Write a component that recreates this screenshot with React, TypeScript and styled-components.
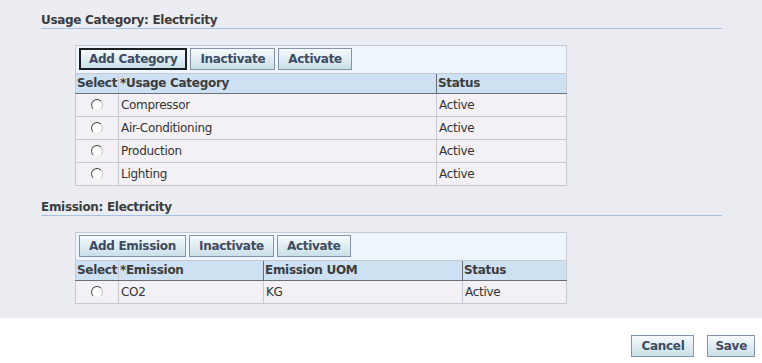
import React from "react";
import styled, { createGlobalStyle } from "styled-components";

const Global = createGlobalStyle`
  html, body { margin: 0; padding: 0; background: #ffffff; }
  body {
    font-family: "DejaVu Sans", Verdana, sans-serif;
    font-size: 12px;
    letter-spacing: -0.3px;
    color: #333333;
  }
`;

const Page = styled.div`
  width: 762px;
`;

const Content = styled.div`
  background: #ecedf2;
  height: 318px;
  padding: 0 40px 0 41px;
  box-sizing: border-box;
  overflow: hidden;
`;

const Heading = styled.h2<{ $first?: boolean }>`
  margin: ${(p) => (p.$first ? "0" : "1px")} 0 0 0;
  padding-top: 13px;
  height: 15px;
  line-height: 15px;
  font-size: 12px;
  font-weight: bold;
  color: #3c3c3c;
  border-bottom: 1px solid #a3c2e3;
`;

const Grid = styled.table`
  border-collapse: collapse;
  table-layout: fixed;
  width: 491px;
  margin: 16px 0 0 34px;
  border: 1px solid #c6c9d3;
`;

const ToolbarCell = styled.td`
  background: #eef5fd;
  padding: 2px 3px 2px;
  border-bottom: 1px solid #c6c9d3;
`;

const Toolbar = styled.div`
  display: flex;
  gap: 3px;
  height: 23px;
`;

const Button = styled.button<{ $focused?: boolean; $pad?: number }>`
  box-sizing: border-box;
  font-family: "DejaVu Sans", Verdana, sans-serif;
  font-size: 12px;
  letter-spacing: -0.3px;
  font-weight: bold;
  color: #3e4b61;
  height: 22px;
  padding: 0 ${(p) => (p.$pad ?? 9) - (p.$focused ? 1 : 0)}px;
  border: ${(p) => (p.$focused ? "2px solid #1c1f24" : "1px solid #8493a8")};
  background: linear-gradient(#f6fafc, #c9dfe8);
  line-height: 18px;
  white-space: nowrap;
  cursor: pointer;
`;

const Th = styled.th<{ $dark?: boolean }>`
  background: #cde1f3;
  color: #3c3c3c;
  font-weight: bold;
  text-align: left;
  padding: 0 1px;
  height: 19px;
  line-height: 19px;
  border-bottom: 1px solid #6b7078;
  border-left: 1px solid ${(p) => (p.$dark ? "#6b7078" : "#c6c9d3")};
  white-space: nowrap;
  overflow: hidden;
`;

const Td = styled.td<{ $center?: boolean }>`
  background: #f3f1f5;
  color: #333333;
  padding: 0 2px;
  height: 22px;
  line-height: 22px;
  border: 1px solid #c6c9d3;
  text-align: ${(p) => (p.$center ? "center" : "left")};
  white-space: nowrap;
`;

const Radio = styled.span`
  display: inline-block;
  width: 10px;
  height: 10px;
  border-radius: 50%;
  border: 1px solid;
  border-color: #3e3e3e #c4c4c4 #eeeeee #555555;
  background: radial-gradient(circle at 60% 60%, #ffffff 55%, #dcdcdc 100%);
  vertical-align: middle;
  margin-top: -1px;
`;

const Footer = styled.div`
  display: flex;
  justify-content: flex-end;
  gap: 13px;
  padding: 17px 7px 0 0;
`;

type Col = { title: string; width: number; dark?: boolean };

const DataTable: React.FC<{
  buttons: string[];
  cols: Col[];
  rows: string[][];
}> = ({ buttons, cols, rows }) => (
  <Grid>
    <colgroup>
      {cols.map((c) => (
        <col key={c.title} style={{ width: c.width }} />
      ))}
    </colgroup>
    <tbody>
      <tr>
        <ToolbarCell colSpan={cols.length}>
          <Toolbar>
            {buttons.map((b, i) => (
              <Button key={b} $focused={i === 0 && b === "Add Category"}>
                {b}
              </Button>
            ))}
          </Toolbar>
        </ToolbarCell>
      </tr>
      <tr>
        {cols.map((c) => (
          <Th key={c.title} $dark={c.dark}>
            {c.title}
          </Th>
        ))}
      </tr>
      {rows.map((r) => (
        <tr key={r[0]}>
          <Td $center>
            <Radio />
          </Td>
          {r.map((v, i) => (
            <Td key={i}>{v}</Td>
          ))}
        </tr>
      ))}
    </tbody>
  </Grid>
);

export default function App() {
  return (
    <Page>
      <Global />
      <Content>
        <Heading $first>Usage Category: Electricity</Heading>
        <DataTable
          buttons={["Add Category", "Inactivate", "Activate"]}
          cols={[
            { title: "Select", width: 43 },
            { title: "*Usage Category", width: 318 },
            { title: "Status", width: 130, dark: true },
          ]}
          rows={[
            ["Compressor", "Active"],
            ["Air-Conditioning", "Active"],
            ["Production", "Active"],
            ["Lighting", "Active"],
          ]}
        />
        <Heading>Emission: Electricity</Heading>
        <DataTable
          buttons={["Add Emission", "Inactivate", "Activate"]}
          cols={[
            { title: "Select", width: 43 },
            { title: "*Emission", width: 145 },
            { title: "Emission UOM", width: 199, dark: true },
            { title: "Status", width: 104, dark: true },
          ]}
          rows={[["CO2", "KG", "Active"]]}
        />
      </Content>
      <Footer>
        <Button>Cancel</Button>
        <Button $pad={7}>Save</Button>
      </Footer>
    </Page>
  );
}
